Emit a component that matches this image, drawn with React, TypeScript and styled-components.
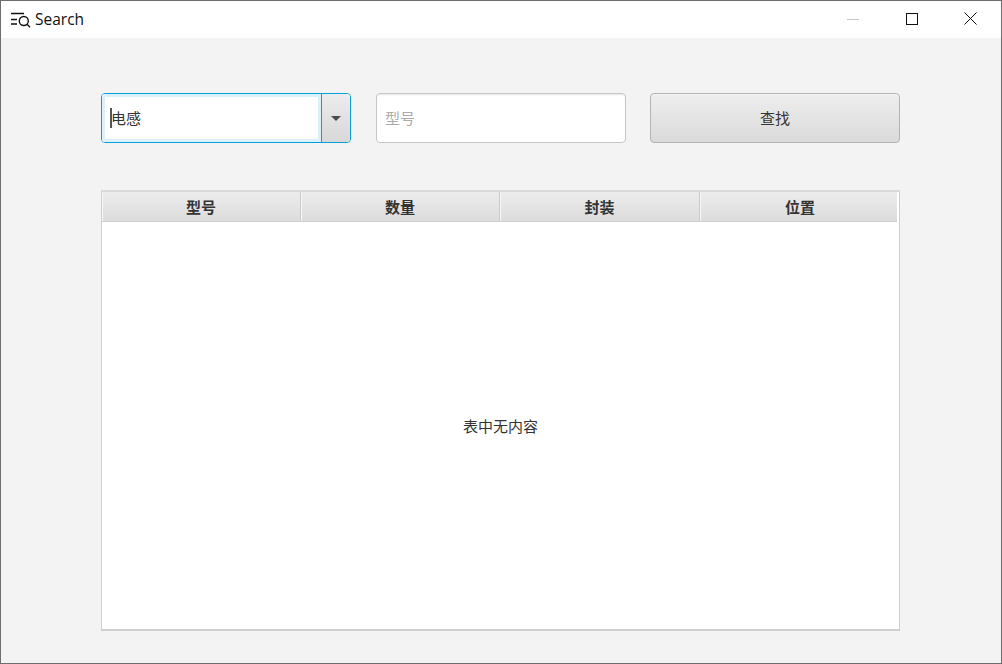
import React from "react";
import styled, { createGlobalStyle } from "styled-components";

const Global = createGlobalStyle`
  html, body { margin: 0; padding: 0; background: #f3f3f3; }
  * { box-sizing: border-box; }
`;

const cjk = `"Noto Sans CJK SC", "Liberation Sans", sans-serif`;

const Window = styled.div`
  width: 1002px;
  height: 664px;
  border: 1px solid #6e6e6e;
  background: #f3f3f3;
  display: flex;
  flex-direction: column;
  overflow: hidden;
`;

const TitleBar = styled.div`
  height: 37px;
  flex: none;
  background: #fff;
  display: flex;
  align-items: center;
  padding-left: 10px;
`;

const AppIcon = styled.svg`
  width: 20px;
  height: 16px;
  flex: none;
`;

const TitleText = styled.span`
  margin-left: 4px;
  margin-bottom: 2px;
  font: 15.5px "Open Sans", "Noto Sans", sans-serif;
  color: #111;
`;

const WindowButtons = styled.div`
  margin-left: auto;
  margin-right: 1px;
  margin-bottom: 2px;
  display: flex;
  height: 100%;
`;

const WindowButton = styled.div`
  width: 59px;
  height: 100%;
  display: flex;
  align-items: center;
  justify-content: center;
`;

const Content = styled.div`
  flex: 1;
  display: flex;
  flex-direction: column;
  padding: 55px 101px 32px 100px;
`;

const Toolbar = styled.div`
  display: flex;
  height: 50px;
  flex: none;
`;

const Combo = styled.div`
  width: 250px;
  height: 50px;
  display: flex;
  border: 1px solid #06a0d8;
  border-radius: 4px;
  overflow: hidden;
  background: #fff;
`;

const ComboField = styled.div`
  flex: 1;
  display: flex;
  align-items: center;
  padding: 0 0 2px 5px;
  border: 3px solid #dcf0fa;
  background: #fff;
  font: 15px/1 ${cjk};
  color: #333;
`;

const Caret = styled.span`
  width: 2px;
  height: 20px;
  margin-top: 2px;
  margin-right: -1px;
  background: #555;
`;

const ComboArrow = styled.div`
  width: 29px;
  flex: none;
  border-left: 1px solid #06a0d8;
  background: linear-gradient(#ececec, #d8d8d8);
  display: flex;
  align-items: center;
  justify-content: center;
  &::after {
    content: "";
    width: 0;
    height: 0;
    border-left: 5px solid transparent;
    border-right: 5px solid transparent;
    border-top: 5px solid #4a4a4a;
  }
`;

const TextInput = styled.input`
  width: 250px;
  height: 50px;
  margin: 0 24px 0 25px;
  border: 1px solid #c6c6c6;
  border-radius: 4px;
  background: #fff;
  box-shadow: inset 0 2px 2px -1px #e4e4e4;
  padding: 0 8px 2px;
  font: 15px ${cjk};
  outline: none;
  &::placeholder { color: #ababab; opacity: 1; }
`;

const SearchButton = styled.button`
  width: 250px;
  height: 50px;
  border: 1px solid #b4b4b4;
  border-radius: 4px;
  background: linear-gradient(#eeeeee, #dadada);
  box-shadow: inset 0 1px 0 #f6f6f6;
  font: 15px ${cjk};
  color: #333;
  padding: 0 0 2px;
`;

const Table = styled.div`
  margin-top: 47px;
  flex: 1;
  display: flex;
  flex-direction: column;
  background: #fff;
  border: 1px solid #cfcfcf;
  border-top: 2px solid #dadada;
  border-bottom-width: 2px;
`;

const HeaderRow = styled.div`
  height: 30px;
  flex: none;
  display: grid;
  grid-template-columns: 199px 199px 200px 197px;
  width: 795px;
  border-bottom: 1px solid #d0d0d0;
`;

const HeaderCell = styled.div`
  display: flex;
  align-items: center;
  justify-content: center;
  background: linear-gradient(#ececec, #dcdcdc);
  border-right: 1px solid #cacaca;
  box-shadow: inset 1px 0 0 #f7f7f7;
  font: bold 15px/1 ${cjk};
  color: #333;
  &:last-child { border-right: none; padding-left: 3px; }
`;

const EmptyBody = styled.div`
  flex: 1;
  display: flex;
  align-items: center;
  justify-content: center;
  font: 15px/1 ${cjk};
  color: #333;
`;

const columns = ["型号", "数量", "封装", "位置"];

export default function App() {
  return (
    <>
      <Global />
      <Window>
        <TitleBar>
          <AppIcon viewBox="0 0 20 16" fill="none" stroke="#111" strokeWidth="1.4">
            <path d="M0 1.5h13M0 7.5h6M0 12h6" />
            <circle cx="12.8" cy="9" r="4.5" />
            <path d="M16 12.2l3 3" />
          </AppIcon>
          <TitleText>Search</TitleText>
          <WindowButtons>
            <WindowButton>
              <svg width="12" height="12" viewBox="0 0 12 12" fill="none" stroke="#c8c8c8">
                <path d="M0 6.5h12" />
              </svg>
            </WindowButton>
            <WindowButton>
              <svg width="12" height="12" viewBox="0 0 12 12" fill="none" stroke="#111">
                <rect x="0.5" y="0.5" width="11" height="11" />
              </svg>
            </WindowButton>
            <WindowButton>
              <svg width="13" height="13" viewBox="0 0 13 13" fill="none" stroke="#111">
                <path d="M0.5 0.5l12 12M12.5 0.5l-12 12" />
              </svg>
            </WindowButton>
          </WindowButtons>
        </TitleBar>
        <Content>
          <Toolbar>
            <Combo>
              <ComboField>
                <Caret />
                电感
              </ComboField>
              <ComboArrow />
            </Combo>
            <TextInput placeholder="型号" />
            <SearchButton>查找</SearchButton>
          </Toolbar>
          <Table>
            <HeaderRow>
              {columns.map((c) => (
                <HeaderCell key={c}>{c}</HeaderCell>
              ))}
            </HeaderRow>
            <EmptyBody>表中无内容</EmptyBody>
          </Table>
        </Content>
      </Window>
    </>
  );
}
